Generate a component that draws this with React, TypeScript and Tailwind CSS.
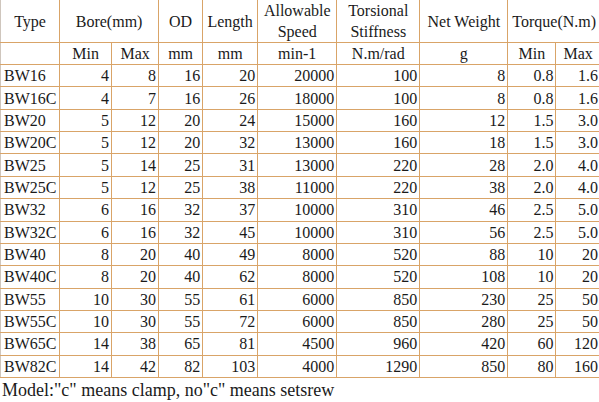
const rows: (string | number)[][] = [
  ['BW16', 4, 8, 16, 20, 20000, 100, 8, '0.8', '1.6'],
  ['BW16C', 4, 7, 16, 26, 18000, 100, 8, '0.8', '1.6'],
  ['BW20', 5, 12, 20, 24, 15000, 160, 12, '1.5', '3.0'],
  ['BW20C', 5, 12, 20, 32, 13000, 160, 18, '1.5', '3.0'],
  ['BW25', 5, 14, 25, 31, 13000, 220, 28, '2.0', '4.0'],
  ['BW25C', 5, 12, 25, 38, 11000, 220, 38, '2.0', '4.0'],
  ['BW32', 6, 16, 32, 37, 10000, 310, 46, '2.5', '5.0'],
  ['BW32C', 6, 16, 32, 45, 10000, 310, 56, '2.5', '5.0'],
  ['BW40', 8, 20, 40, 49, 8000, 520, 88, 10, 20],
  ['BW40C', 8, 20, 40, 62, 8000, 520, 108, 10, 20],
  ['BW55', 10, 30, 55, 61, 6000, 850, 230, 25, 50],
  ['BW55C', 10, 30, 55, 72, 6000, 850, 280, 25, 50],
  ['BW65C', 14, 38, 65, 81, 4500, 960, 420, 60, 120],
  ['BW82C', 14, 42, 82, 103, 4000, 1290, 850, 80, 160],
];

const widths = [59, 52, 47, 44, 55, 79, 83, 88, 48, 44];

const cell = 'border border-[#d9a468] p-0';

export default function App() {
  return (
    <div className="w-[599px] h-[402px] bg-white overflow-hidden text-[#1a1a1a] text-[16px] font-['Liberation_Serif',serif]">
      <table className="table-fixed border-collapse w-[600px] leading-[21px] border-l border-l-[#cfc6bd]">
        <colgroup>
          {widths.map((w, i) => (
            <col key={i} style={{ width: w }} />
          ))}
        </colgroup>
        <thead>
          <tr className="h-[42px]">
            <th className={`${cell} border-t-0 border-l-[#cfc6bd] font-normal`}>Type</th>
            <th colSpan={2} className={`${cell} border-t-0 font-normal`}>Bore(mm)</th>
            <th className={`${cell} border-t-0 font-normal`}>OD</th>
            <th className={`${cell} border-t-0 font-normal`}>Length</th>
            <th className={`${cell} border-t-0 font-normal`}>
              Allowable
              <br />
              Speed
            </th>
            <th className={`${cell} border-t-0 font-normal`}>
              Torsional
              <br />
              Stiffness
            </th>
            <th className={`${cell} border-t-0 font-normal`}>Net Weight</th>
            <th colSpan={2} className={`${cell} border-t-0 border-r-0 font-normal whitespace-nowrap`}>Torque(N.m)</th>
          </tr>
          <tr className="h-[22px]">
            <th className={`${cell} border-l-[#cfc6bd] font-normal`}></th>
            <th className={`${cell} font-normal`}>Min</th>
            <th className={`${cell} font-normal`}>Max</th>
            <th className={`${cell} font-normal`}>mm</th>
            <th className={`${cell} font-normal`}>mm</th>
            <th className={`${cell} font-normal`}>min-1</th>
            <th className={`${cell} font-normal`}>N.m/rad</th>
            <th className={`${cell} font-normal`}>g</th>
            <th className={`${cell} font-normal`}>Min</th>
            <th className={`${cell} border-r-0 font-normal`}>Max</th>
          </tr>
        </thead>
        <tbody>
          {rows.map((r) => (
            <tr key={r[0]} className="h-[22.36px]">
              {r.map((v, i) => (
                <td
                  key={i}
                  className={
                    i === 0
                      ? `${cell} border-l-[#cfc6bd] text-left pl-[3px]`
                      : `${cell} ${i === 9 ? 'border-r-0' : ''} text-right pr-[2px]`
                  }
                >
                  {v}
                </td>
              ))}
            </tr>
          ))}
        </tbody>
      </table>
      <div className="pl-[2px] pt-[2px] text-[18px] leading-[21px]">Model:"c" means clamp, no"c" means setsrew</div>
    </div>
  );
}
